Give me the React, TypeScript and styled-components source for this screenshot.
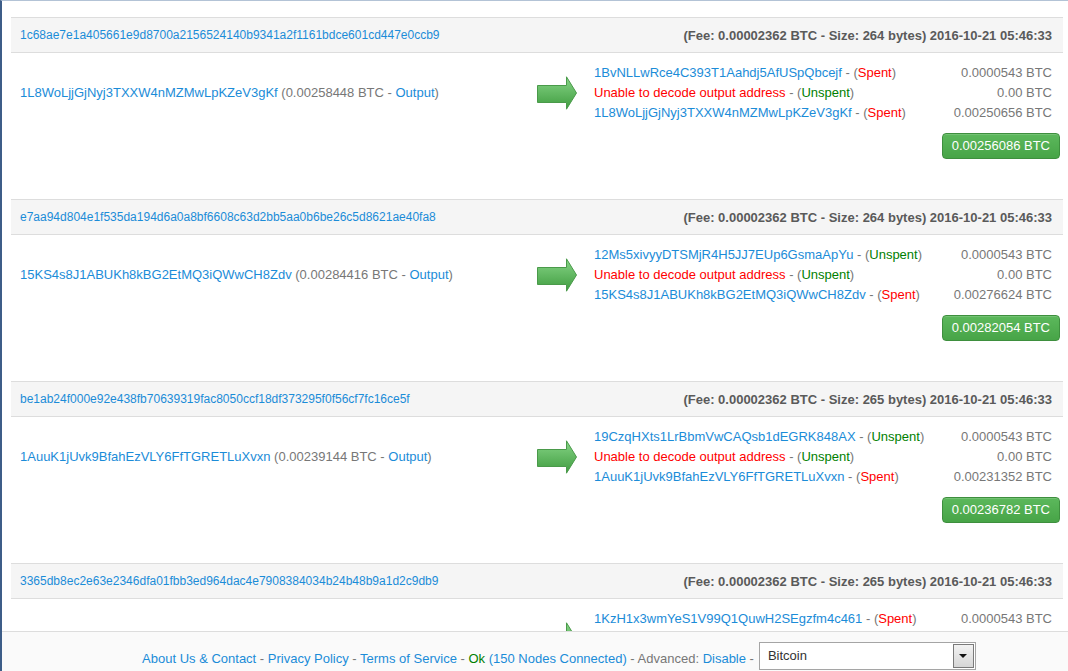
import styled, { createGlobalStyle } from "styled-components";

const GlobalStyle = createGlobalStyle`
  html, body {
    margin: 0;
    padding: 0;
    background: #fff;
  }
  body {
    font-family: "Liberation Sans", Arial, sans-serif;
    font-size: 13px;
    color: #777;
  }
`;

const LINK = "#1b8cd8";

const Page = styled.div`
  min-height: 100vh;
  box-sizing: border-box;
  border-top: 1px solid #b3c3d6;
  border-left: 2px solid #3d5d88;
  padding: 16px 5px 60px 9px;
`;

const Block = styled.section`
  margin-bottom: 29px;
`;

const Head = styled.div`
  display: flex;
  justify-content: space-between;
  align-items: center;
  height: 34px;
  padding: 0 11px 0 9px;
  background: #f5f5f5;
  border-top: 1px solid #ddd;
  border-bottom: 1px solid #ddd;
  font-size: 12px;
`;

const Meta = styled.span`
  font-weight: bold;
  font-size: 13px;
  color: #5a5a5a;
`;

const Link = styled.a`
  color: ${LINK};
  text-decoration: none;
  cursor: pointer;
`;

const Body = styled.div`
  display: grid;
  grid-template-columns: 1fr 40px 466px;
  column-gap: 17px;
  padding: 10px 3px 11px 9px;
`;

const Input = styled.div`
  align-self: center;
  line-height: 20px;
  white-space: nowrap;
`;

const ArrowBox = styled.div`
  align-self: center;
  height: 34px;
  svg {
    display: block;
  }
`;

const Outputs = styled.div`
  display: flex;
  flex-direction: column;
`;

const OutRow = styled.div`
  display: flex;
  justify-content: space-between;
  line-height: 20px;
  padding-right: 8px;
  white-space: nowrap;
`;

const Status = styled.span<{ $spent: boolean }>`
  color: ${(p) => (p.$spent ? "#f00" : "#008000")};
`;

const Undecoded = styled.span`
  color: #f00;
`;

const Total = styled.span`
  grid-column: 3;
  justify-self: end;
  margin-top: 10px;
  height: 24px;
  line-height: 24px;
  padding: 0 9px;
  color: #fff;
  font-size: 13px;
  border: 1px solid #3e8f3e;
  border-radius: 4px;
  background: linear-gradient(#5cb85c, #47a447);
  box-shadow: inset 0 1px 0 rgba(255, 255, 255, 0.15);
`;

const Footer = styled.footer`
  position: fixed;
  left: 2px;
  right: 0;
  bottom: -10px;
  height: 50px;
  box-sizing: border-box;
  display: flex;
  justify-content: center;
  align-items: flex-start;
  padding: 10px 0 0 48px;
  background: #fafafa;
  border-top: 1px solid #ddd;
  font-size: 13px;
`;

const FooterText = styled.div`
  line-height: 20px;
  padding-top: 7px;
  white-space: pre;
`;

const Ok = styled.span`
  color: #008000;
`;

const Select = styled.div`
  position: relative;
  width: 217px;
  height: 28px;
  box-sizing: border-box;
  margin-left: 5px;
  border: 1px solid #a5a5a5;
  background: #fff;
  color: #333;
  font-size: 13px;
  line-height: 26px;
  padding-left: 8px;
`;

const SelectBtn = styled.span`
  position: absolute;
  right: 1px;
  top: 1px;
  width: 21px;
  height: 24px;
  box-sizing: border-box;
  border: 1px solid #7a7a7a;
  background: linear-gradient(#f2f2f2, #d6d6d6);
  display: flex;
  align-items: center;
  justify-content: center;
  &::after {
    content: "";
    border-left: 4px solid transparent;
    border-right: 4px solid transparent;
    border-top: 4px solid #111;
  }
`;

type Out = { addr: string | null; spent: boolean; amount: string };
type Tx = {
  hash: string;
  size: number;
  input: string;
  inAmount: string;
  outs: Out[];
  total: string;
};

const txs: Tx[] = [
  {
    hash: "1c68ae7e1a405661e9d8700a2156524140b9341a2f1161bdce601cd447e0ccb9",
    size: 264,
    input: "1L8WoLjjGjNyj3TXXW4nMZMwLpKZeV3gKf",
    inAmount: "0.00258448",
    outs: [
      { addr: "1BvNLLwRce4C393T1Aahdj5AfUSpQbcejf", spent: true, amount: "0.0000543" },
      { addr: null, spent: false, amount: "0.00" },
      { addr: "1L8WoLjjGjNyj3TXXW4nMZMwLpKZeV3gKf", spent: true, amount: "0.00250656" },
    ],
    total: "0.00256086",
  },
  {
    hash: "e7aa94d804e1f535da194d6a0a8bf6608c63d2bb5aa0b6be26c5d8621ae40fa8",
    size: 264,
    input: "15KS4s8J1ABUKh8kBG2EtMQ3iQWwCH8Zdv",
    inAmount: "0.00284416",
    outs: [
      { addr: "12Ms5xivyyDTSMjR4H5JJ7EUp6GsmaApYu", spent: false, amount: "0.0000543" },
      { addr: null, spent: false, amount: "0.00" },
      { addr: "15KS4s8J1ABUKh8kBG2EtMQ3iQWwCH8Zdv", spent: true, amount: "0.00276624" },
    ],
    total: "0.00282054",
  },
  {
    hash: "be1ab24f000e92e438fb70639319fac8050ccf18df373295f0f56cf7fc16ce5f",
    size: 265,
    input: "1AuuK1jUvk9BfahEzVLY6FfTGRETLuXvxn",
    inAmount: "0.00239144",
    outs: [
      { addr: "19CzqHXts1LrBbmVwCAQsb1dEGRK848AX", spent: false, amount: "0.0000543" },
      { addr: null, spent: false, amount: "0.00" },
      { addr: "1AuuK1jUvk9BfahEzVLY6FfTGRETLuXvxn", spent: true, amount: "0.00231352" },
    ],
    total: "0.00236782",
  },
  {
    hash: "3365db8ec2e63e2346dfa01fbb3ed964dac4e7908384034b24b48b9a1d2c9db9",
    size: 265,
    input: "1KzH1x3wmYeS1V99Q1QuwH2SEgzfm4c461",
    inAmount: "0.00243776",
    outs: [
      { addr: "1KzH1x3wmYeS1V99Q1QuwH2SEgzfm4c461", spent: true, amount: "0.0000543" },
      { addr: null, spent: false, amount: "0.00" },
      { addr: "1KzH1x3wmYeS1V99Q1QuwH2SEgzfm4c461", spent: true, amount: "0.00235984" },
    ],
    total: "0.00241414",
  },
];

const Arrow = () => (
  <svg width="40" height="34" viewBox="0 0 40 34">
    <defs>
      <linearGradient id="ag" x1="0" y1="0" x2="0" y2="1">
        <stop offset="0" stopColor="#86d486" />
        <stop offset="1" stopColor="#3f9c3f" />
      </linearGradient>
    </defs>
    <path
      d="M0.5 9.5H29.5V0.8L39.5 17L29.5 33.2V26.5H0.5Z"
      fill="url(#ag)"
      stroke="#4a9a4a"
      strokeWidth="1"
    />
  </svg>
);

const TxBlock = ({ tx }: { tx: Tx }) => (
  <Block>
    <Head>
      <Link>{tx.hash}</Link>
      <Meta>
        (Fee: 0.00002362 BTC - Size: {tx.size} bytes) 2016-10-21 05:46:33
      </Meta>
    </Head>
    <Body>
      <Input>
        <Link>{tx.input}</Link> ({tx.inAmount} BTC - <Link>Output</Link>)
      </Input>
      <ArrowBox>
        <Arrow />
      </ArrowBox>
      <Outputs>
        {tx.outs.map((o, i) => (
          <OutRow key={i}>
            <span>
              {o.addr ? <Link>{o.addr}</Link> : <Undecoded>Unable to decode output address</Undecoded>}
              {" - ("}
              <Status $spent={o.spent}>{o.spent ? "Spent" : "Unspent"}</Status>)
            </span>
            <span>{o.amount} BTC</span>
          </OutRow>
        ))}
      </Outputs>
      <Total>{tx.total} BTC</Total>
    </Body>
  </Block>
);

export default function App() {
  return (
    <>
      <GlobalStyle />
      <Page>
        {txs.map((tx) => (
          <TxBlock key={tx.hash} tx={tx} />
        ))}
      </Page>
      <Footer>
        <FooterText>
          <Link>About Us &amp; Contact</Link> - <Link>Privacy Policy</Link> -{" "}
          <Link>Terms of Service</Link> - <Ok>Ok</Ok> <Link>(150 Nodes Connected)</Link> - Advanced:{" "}
          <Link>Disable</Link> -
        </FooterText>
        <Select>
          Bitcoin
          <SelectBtn />
        </Select>
      </Footer>
    </>
  );
}
